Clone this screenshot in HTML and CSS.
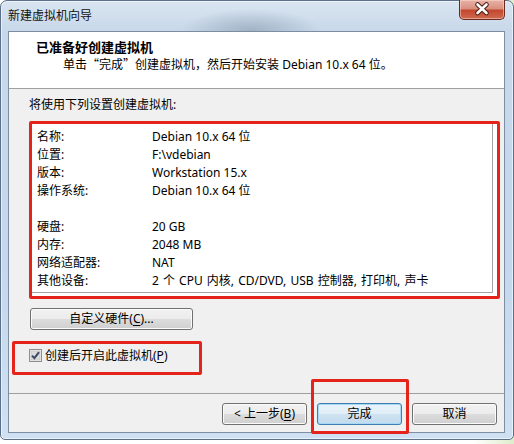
FILE: index.html
```html
<!DOCTYPE html>
<html lang="zh-CN">
<head>
<meta charset="utf-8">
<title>新建虚拟机向导</title>
<link rel="stylesheet" href="styles.css">
</head>
<body>
<div class="window">
  <div class="titlebar">
    <span class="title">新建虚拟机向导</span>
    <div class="close">
      <svg width="46" height="20" viewBox="0 0 46 20">
        <path d="M18.5 5.5 L27.5 14 M27.5 5.5 L18.5 14" stroke="#4a1a12" stroke-width="4.6" stroke-linecap="round" fill="none"/>
        <path d="M18.5 5.5 L27.5 14 M27.5 5.5 L18.5 14" stroke="#ffffff" stroke-width="2.6" stroke-linecap="round" fill="none"/>
      </svg>
    </div>
  </div>
  <div class="client">
    <div class="header">
      <div class="h-title">已准备好创建虚拟机</div>
      <div class="h-sub">单击<span class="cjk">“</span>完成<span class="cjk">”</span>创建虚拟机，然后开始安装 Debian 10.x 64 位。</div>
    </div>
    <div class="body">
      <div class="intro">将使用下列设置创建虚拟机:</div>
      <div class="mark mark-list">
        <div class="listbox">
          <div class="row"><span class="k">名称:</span><span class="v">Debian 10.x 64 位</span></div>
          <div class="row"><span class="k">位置:</span><span class="v">F:\vdebian</span></div>
          <div class="row"><span class="k">版本:</span><span class="v">Workstation 15.x</span></div>
          <div class="row"><span class="k">操作系统:</span><span class="v">Debian 10.x 64 位</span></div>
          <div class="row"></div>
          <div class="row"><span class="k">硬盘:</span><span class="v">20 GB</span></div>
          <div class="row"><span class="k">内存:</span><span class="v">2048 MB</span></div>
          <div class="row"><span class="k">网络适配器:</span><span class="v">NAT</span></div>
          <div class="row"><span class="k">其他设备:</span><span class="v wide">2 个 CPU 内核, CD/DVD, USB 控制器, 打印机, 声卡</span></div>
        </div>
      </div>
      <button class="btn btn-custom">自定义硬件(<u>C</u>)...</button>
      <div class="mark mark-check">
        <label class="check">
          <svg class="box" width="13" height="13" viewBox="0 0 13 13">
            <rect x="0.5" y="0.5" width="12" height="12" fill="#f4f4f4" stroke="#8e8f8f"/>
            <rect x="2" y="2" width="9" height="9" fill="#dcdcdc" stroke="#c4c4c4" stroke-width="0.8"/>
            <path d="M3 6.6 L5.4 9.2 L10 3.2" stroke="#3b4a68" stroke-width="2" fill="none"/>
          </svg>
          <span>创建后开启此虚拟机(<u>P</u>)</span>
        </label>
      </div>
    </div>
    <div class="footer">
      <button class="btn">&lt; 上一步(<u>B</u>)</button>
      <span class="marked"><button class="btn btn-default">完成</button></span>
      <button class="btn">取消</button>
    </div>
  </div>
</div>
</body>
</html>
```
FILE: styles.css
```css
* { box-sizing: border-box; }
html, body { margin: 0; padding: 0; }
body {
  width: 514px;
  height: 444px;
  overflow: hidden;
  background: linear-gradient(to right, #ffffff 0%, #ffffff 92%, #dfeccb 100%);
  font-family: "Noto Sans", "Noto Sans CJK SC", sans-serif;
  font-size: 12px;
  color: #000;
}
.cjk { font-family: "Noto Sans CJK SC", sans-serif; }
.window {
  width: 514px;
  height: 440px;
  border: 1px solid #5c7189;
  border-radius: 7px 7px 5px 5px;
  background:
    radial-gradient(ellipse 70px 22px at 250px 30px, rgba(110, 130, 150, 0.45), rgba(110, 130, 150, 0) 100%),
    linear-gradient(to bottom, #d9e5f1 0px, #c8d8ea 30px, #c4d7ec 60%, #cfe0f2 100%);
  box-shadow: inset 0 0 0 1px rgba(255, 255, 255, 0.55);
  padding: 0 8px 5px 7px;
  display: flex;
  flex-direction: column;
}
.titlebar {
  height: 30px;
  display: flex;
  justify-content: space-between;
  align-items: flex-start;
}
.title {
  margin-top: 7px;
  line-height: 16px;
  font-size: 12px;
  color: #111;
}
.close {
  width: 46px;
  height: 20px;
  margin-top: -1px;
  border: 1px solid #6b2a20;
  border-top: none;
  border-radius: 0 0 5px 5px;
  background: linear-gradient(to bottom, #e8b3a8 0%, #d9907f 45%, #c4472f 55%, #cf6a4f 100%);
  box-shadow: inset 0 0 0 1px rgba(255, 220, 210, 0.5);
}
.close svg { display: block; margin: -1px 0 0 -1px; }
.client {
  height: 402px;
  border: 1px solid #7d8ea2;
  background: #f0f0f0;
  display: flex;
  flex-direction: column;
}
.header {
  height: 57px;
  background: #fff;
  border-bottom: 1px solid #a0a0a0;
  padding-top: 7px;
}
.h-title {
  padding-left: 27px;
  font-size: 13px;
  font-weight: bold;
  line-height: 16px;
}
.h-sub {
  padding-left: 54px;
  line-height: 17px;
}
.body {
  flex: 1;
  display: flex;
  flex-direction: column;
  align-items: flex-start;
  padding-top: 8px;
}
.intro {
  margin-left: 20px;
  line-height: 16px;
}
.mark {
  border: 3px solid #e4231b;
  border-radius: 2px;
}
.mark-list {
  margin: 8px 0 0 20px;
  width: 471px;
  background: #fff;
}
.listbox {
  margin: 0 4px 3px 0;
  border-right: 1px solid #a5a5a5;
  border-bottom: 1px solid #a5a5a5;
  padding: 4px 0 2px 5px;
  background: #fff;
}
.row {
  height: 18px;
  line-height: 18px;
  display: flex;
  white-space: nowrap;
}
.k { width: 115px; flex: none; }
.wide { word-spacing: 1px; }
.btn {
  font: inherit;
  color: #000;
  height: 22px;
  width: 85px;
  padding: 0;
  border: 1px solid #707070;
  border-radius: 3px;
  background: linear-gradient(to bottom, #f2f2f2 0%, #ebebeb 50%, #dddddd 50%, #cfcfcf 100%);
  box-shadow: inset 0 0 0 1px #fbfbfb;
  line-height: 18px;
}
.btn u { text-decoration: underline; text-underline-offset: 2px; }
.btn-custom {
  margin: 9px 0 0 21px;
  width: 163px;
}
.mark-check {
  margin: 11px 0 0 3px;
  width: 190px;
  height: 34px;
  padding: 4px 0 0 14px;
}
.check {
  display: flex;
  align-items: center;
  gap: 3px;
  line-height: 16px;
  height: 16px;
}
.check .box { display: block; flex: none; margin-top: -1px; }
.check u { text-underline-offset: 2px; }
.footer {
  height: 39px;
  border-top: 1px solid #a0a0a0;
  display: flex;
  justify-content: flex-end;
  align-items: flex-start;
  gap: 10px;
  padding: 9px 7px 0 0;
}
.marked {
  position: relative;
  display: block;
}
.marked .btn { display: block; }
.marked::after {
  content: "";
  position: absolute;
  left: -6px;
  right: -7px;
  top: -24px;
  bottom: -9px;
  border: 3px solid #e4231b;
  border-radius: 2px;
}
.btn-default {
  border-color: #3c7fb1;
  background: linear-gradient(to bottom, #eaf3fa 0%, #e0edf7 50%, #cfe3f1 50%, #c3dbee 100%);
  box-shadow: inset 0 0 0 1px #a9d8f5;
}
```
